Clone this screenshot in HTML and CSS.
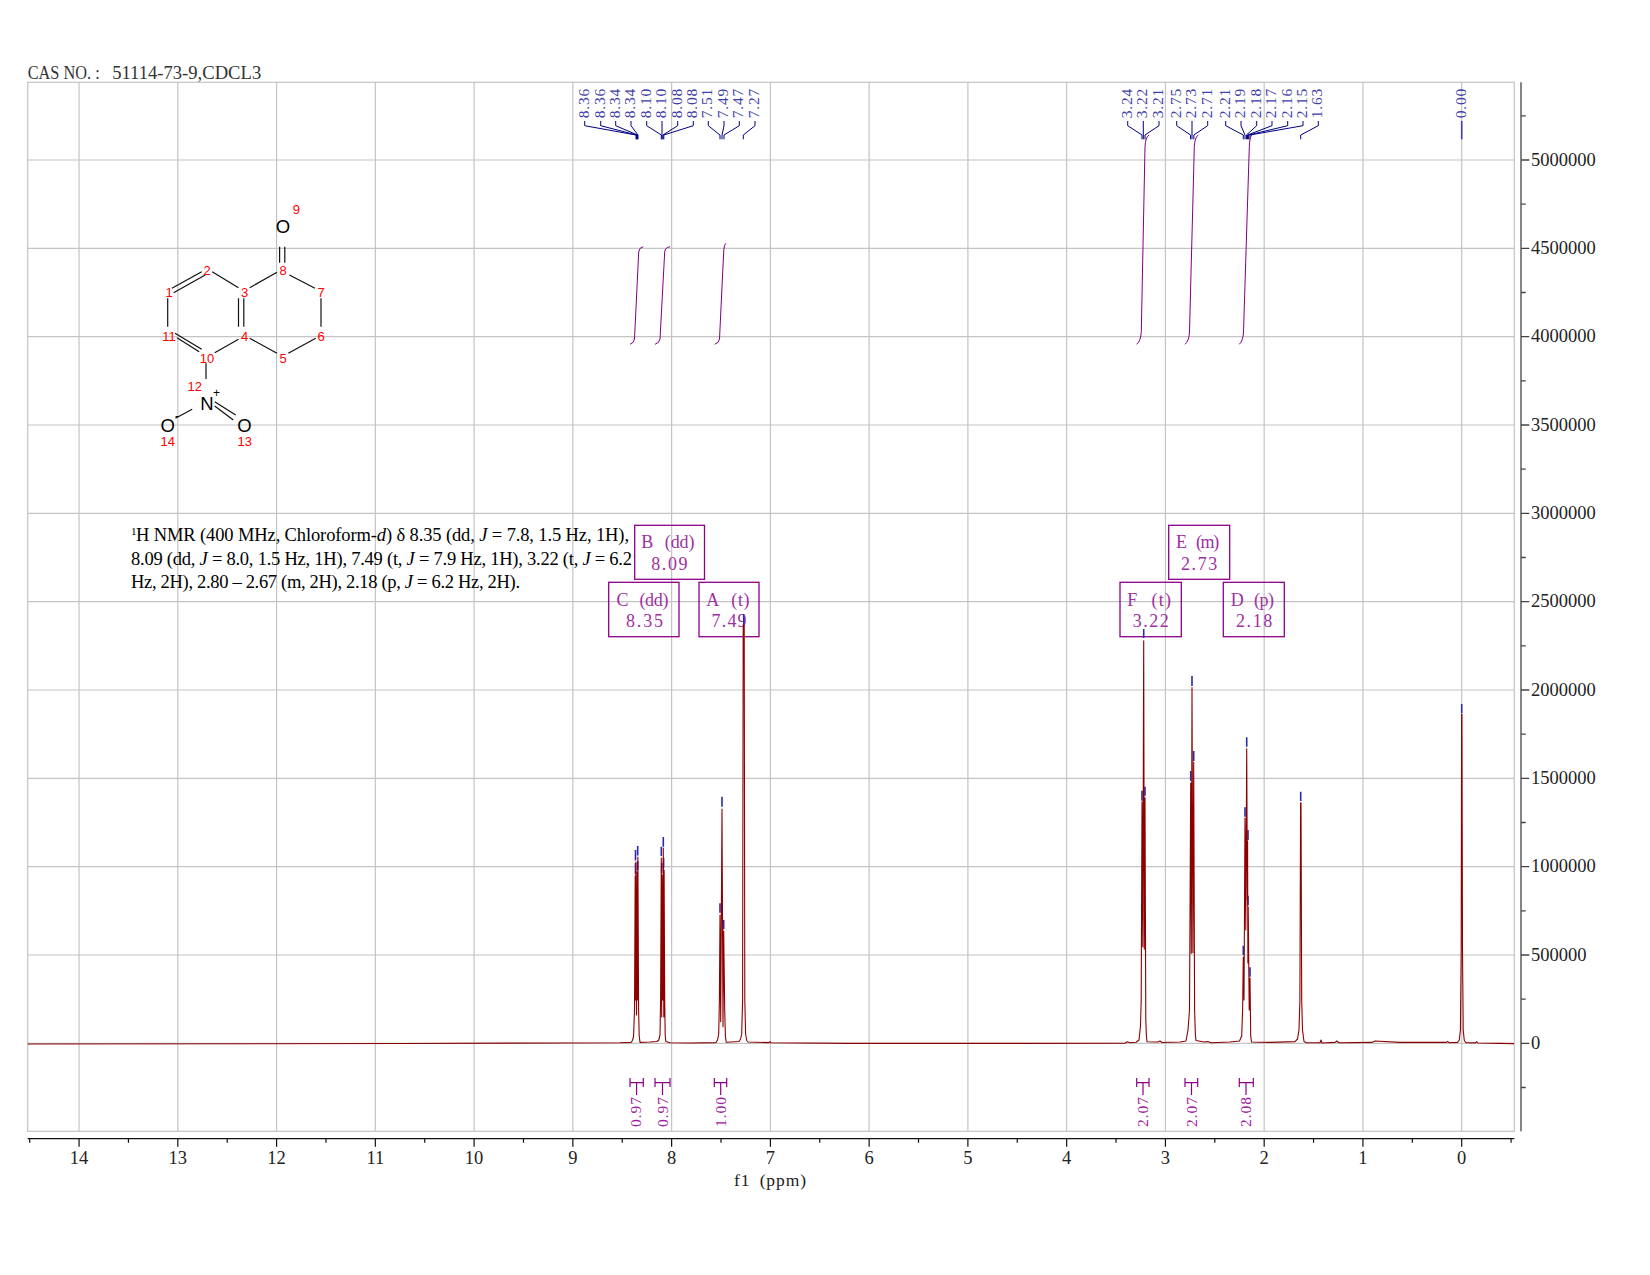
FILE: index.html
```html
<!DOCTYPE html>
<html lang="en">
<head>
<meta charset="utf-8">
<title>1H NMR spectrum</title>
<link rel="stylesheet" href="styles.css">
</head>
<body>
<figure class="page">
<svg class="chart" viewBox="0 0 1650 1275" width="1650" height="1275" xmlns="http://www.w3.org/2000/svg">
  <text class="title" x="27.7" y="79" textLength="72" lengthAdjust="spacingAndGlyphs">CAS NO. :</text>
  <text class="title" x="112.2" y="79" textLength="149" lengthAdjust="spacingAndGlyphs">51114-73-9,CDCL3</text>

  <g class="grid">
    <rect x="27.7" y="82.3" width="1486.6" height="1049"/>
    <path d="M79.06 82.3V1131.3M177.82 82.3V1131.3M276.58 82.3V1131.3M375.34 82.3V1131.3M474.1 82.3V1131.3M572.86 82.3V1131.3M671.62 82.3V1131.3M770.38 82.3V1131.3M869.14 82.3V1131.3M967.9 82.3V1131.3M1066.66 82.3V1131.3M1165.42 82.3V1131.3M1264.18 82.3V1131.3M1362.94 82.3V1131.3M1461.7 82.3V1131.3"/>
    <path d="M27.7 160H1514.3M27.7 248.3H1514.3M27.7 336.7H1514.3M27.7 425H1514.3M27.7 513.3H1514.3M27.7 601.7H1514.3M27.7 690H1514.3M27.7 778.3H1514.3M27.7 866.7H1514.3M27.7 955H1514.3M27.7 1043.3H1514.3"/>
  </g>

  <g class="mol-bonds">
    <path d="M279.6 246.7V262.7M284.8 246.7V262.7"/>
    <path d="M212.2 271.7L238.5 287.7M249.7 287.7L277 272.3M289.4 275L315 288.3M321 298.3V326.7M315.7 338.3L288.3 353.3M277 353.3L249.7 338.3M238.5 339.3L214.7 352.7M206 363.3V379"/>
    <path d="M238.5 298.3V326.7M243.8 298.3V326.7"/>
    <path d="M171.9 288.3L201.7 271.7M173.6 292.7L205.2 275"/>
    <path d="M167.7 298.3V326.7"/>
    <path d="M175 333.3L201.7 349.3M177 337.7L199.2 351.7"/>
    <path d="M214.7 401.7L235.7 415M214.7 406L233.3 420M192.2 409.3L175.4 418.3"/>
  </g>
  <g class="atoms">
    <text x="283" y="232.7">O</text>
    <text x="207" y="410">N</text>
    <text x="167.7" y="432.2">O</text>
    <text x="244.5" y="432.2">O</text>
  </g>
  <text class="charge" x="216.4" y="397">+</text>
  <text class="charge" x="177" y="420">-</text>
  <g class="atom-nums">
    <text x="296.4" y="214">9</text>
    <text x="169" y="297.3">1</text>
    <text x="207" y="274.6">2</text>
    <text x="244.5" y="297.3">3</text>
    <text x="244.5" y="341.3">4</text>
    <text x="283" y="363">5</text>
    <text x="321" y="341.3">6</text>
    <text x="321" y="297.3">7</text>
    <text x="283" y="274.6">8</text>
    <text x="207" y="363">10</text>
    <text x="169" y="341.3">11</text>
    <text x="194.7" y="391.3">12</text>
    <text x="244.8" y="446.3">13</text>
    <text x="167.7" y="446.3">14</text>
  </g>

  <g class="report">
    <text class="report-sup" x="131" y="534.5">1</text>
    <text x="136" y="540.7" textLength="493" lengthAdjust="spacing">H NMR (400 MHz, Chloroform-<tspan class="it">d</tspan>) δ 8.35 (dd, <tspan class="it">J</tspan> = 7.8, 1.5 Hz, 1H),</text>
    <text x="131" y="564.5" textLength="501" lengthAdjust="spacing">8.09 (dd, <tspan class="it">J</tspan> = 8.0, 1.5 Hz, 1H), 7.49 (t, <tspan class="it">J</tspan> = 7.9 Hz, 1H), 3.22 (t, <tspan class="it">J</tspan> = 6.2</text>
    <text x="131" y="588.2" textLength="389" lengthAdjust="spacing">Hz, 2H), 2.80 – 2.67 (m, 2H), 2.18 (p, <tspan class="it">J</tspan> = 6.2 Hz, 2H).</text>
  </g>

  <g class="box-frames">
    <rect x="634.7" y="525.3" width="69.8" height="54"/>
    <rect x="608.7" y="582.3" width="70.3" height="54.4"/>
    <rect x="699" y="582.3" width="60" height="54.4"/>
    <rect x="1168.7" y="525.3" width="61" height="54"/>
    <rect x="1120" y="582.3" width="61.3" height="54.4"/>
    <rect x="1223.3" y="582.3" width="61" height="54.4"/>
  </g>
  <g class="box-text">
    <text x="641.2" y="548" textLength="53.4">B (dd)</text>
    <text x="651.2" y="570" textLength="36.4">8.09</text>
    <text x="616.5" y="605.5" textLength="52">C (dd)</text>
    <text x="626" y="627" textLength="37">8.35</text>
    <text x="706.3" y="605.5" textLength="43.3">A (t)</text>
    <text x="711.5" y="627" textLength="35.1">7.49</text>
    <text x="1176" y="548" textLength="43.3">E (m)</text>
    <text x="1181" y="570" textLength="36.3">2.73</text>
    <text x="1127.3" y="605.5" textLength="43.7">F (t)</text>
    <text x="1132.7" y="627" textLength="36">3.22</text>
    <text x="1230.7" y="605.5" textLength="43.3">D (p)</text>
    <text x="1236" y="627" textLength="36.3">2.18</text>
  </g>

  <g class="peak-labels">
    <text transform="translate(588.7 118.3) rotate(-90)" textLength="29.5">8.36</text>
    <text transform="translate(604.7 118.3) rotate(-90)" textLength="29.5">8.36</text>
    <text transform="translate(619.7 118.3) rotate(-90)" textLength="29.5">8.34</text>
    <text transform="translate(635 118.3) rotate(-90)" textLength="29.5">8.34</text>
    <text transform="translate(650.7 118.3) rotate(-90)" textLength="29.5">8.10</text>
    <text transform="translate(666 118.3) rotate(-90)" textLength="29.5">8.10</text>
    <text transform="translate(681.7 118.3) rotate(-90)" textLength="29.5">8.08</text>
    <text transform="translate(697.3 118.3) rotate(-90)" textLength="29.5">8.08</text>
    <text transform="translate(712.3 118.3) rotate(-90)" textLength="29.5">7.51</text>
    <text transform="translate(728 118.3) rotate(-90)" textLength="29.5">7.49</text>
    <text transform="translate(743.3 118.3) rotate(-90)" textLength="29.5">7.47</text>
    <text transform="translate(759 118.3) rotate(-90)" textLength="29.5">7.27</text>
    <text transform="translate(1131.7 118.3) rotate(-90)" textLength="29.5">3.24</text>
    <text transform="translate(1147.3 118.3) rotate(-90)" textLength="29.5">3.22</text>
    <text transform="translate(1163 118.3) rotate(-90)" textLength="29.5">3.21</text>
    <text transform="translate(1180.7 118.3) rotate(-90)" textLength="29.5">2.75</text>
    <text transform="translate(1196 118.3) rotate(-90)" textLength="29.5">2.73</text>
    <text transform="translate(1211.7 118.3) rotate(-90)" textLength="29.5">2.71</text>
    <text transform="translate(1229.7 118.3) rotate(-90)" textLength="29.5">2.21</text>
    <text transform="translate(1245 118.3) rotate(-90)" textLength="29.5">2.19</text>
    <text transform="translate(1260.7 118.3) rotate(-90)" textLength="29.5">2.18</text>
    <text transform="translate(1276 118.3) rotate(-90)" textLength="29.5">2.17</text>
    <text transform="translate(1291.7 118.3) rotate(-90)" textLength="29.5">2.16</text>
    <text transform="translate(1307 118.3) rotate(-90)" textLength="29.5">2.15</text>
    <text transform="translate(1322.3 118.3) rotate(-90)" textLength="29.5">1.63</text>
    <text transform="translate(1466 118.3) rotate(-90)" textLength="29.5">0.00</text>
  </g>
  <path class="connectors" d="M584.7 121V125.7L636 135V139.3M600.7 121V125.7L636.6 135V139.3M615.7 121V125.7L637.5 135V139.3M631 121V125.7L638 135V139.3M646.7 121V125.7L661.3 135V139.3M662 121V139.3M677.7 121V125.7L663 135V139.3M693.3 121V125.7L663.8 135V139.3M708.3 121V125.7L720 135V139.3M724 121V125.7L722 135V139.3M739.3 121V125.7L724 135V139.3M755 121V125.7L743.3 135V139.3M1127.7 121V125.7L1142 135V139.3M1143.3 121V139.3M1159 121V125.7L1145 135V139.3M1176.7 121V125.7L1190.6 135V139.3M1192 121V139.3M1207.7 121V125.7L1193.8 135V139.3M1225.7 121V125.7L1243.3 135V139.3M1241 121V125.7L1245 135V139.3M1256.7 121V125.7L1246.4 135V139.3M1272 121V125.7L1247.5 135V139.3M1287.7 121V125.7L1248.6 135V139.3M1303 121V125.7L1250 135V139.3M1318.3 121V125.7L1300.7 135V139.3"/>
  <path class="connector-tms" d="M1461.7 121V139.3"/>

  <path class="integrals" d="M630 344.3Q634 343 634.5 339L638.7 252Q639 247.5 643.3 246.7M655 344.3Q659.5 343 660 339L664.7 252Q665 247.5 670 246.7M714.7 344.3Q719 343 719.5 339L723 266L723.8 250Q724.3 244 726 243.3M1136.7 344.3Q1140.8 341 1141.3 331.7L1145 146.7Q1145.5 137 1149 135M1185 344.3Q1189 341 1189.5 332L1194.3 146.7Q1194.8 137 1198.3 135M1239.3 344.3Q1243 341 1243.5 332L1249.3 146.7Q1249.6 137 1252 135"/>

  <path class="marks" d="M635.5 850V860.5M637.7 846V855.5M635.5 863V874M637.7 861V870M661.3 846.7V856M663.3 837V846.7M661.7 863V873M663.6 858V868M720 903.3V912.7M722 796.7V806.7M723.7 920V929.3M743.7 614V625M1142 790.7V800.7M1143.7 629V638M1145 786.7V795.7M1190.7 771V780.7M1192 676V686M1193.7 751V761M1243.3 945.7V955M1245 807.3V816.7M1246.7 737.3V746.7M1248 830V840M1248 895.7V905M1250 967.3V976.7M1300.7 791.7V801M1461.7 704V713"/>
  <path class="spectrum" d="M27.7 1044L400 1043.5L620 1042.8L631 1042.4L632.5 1040.5L633.6 1036L634.5 1010L635.2 876L635.6 1000L635.9 862L636.5 1015L637.2 872L637.4 1000L637.9 857L638.6 1010L639.2 1036L640 1042.4L650 1042L657 1041.5L658.8 1040L660 1035L660.6 1000L661.3 858L661.7 1017L662 875L662.8 1000L663.3 848L663.8 1017L664.1 870L664.7 1000L665.2 1035L665.8 1041.5L670 1042.8L690 1043L716 1042.6L717.5 1040L718.7 1034L719.4 1000L720 915L720.7 1021.7L722 809L723 1026.7L723.7 931L724.7 1010L725.4 1036L726.2 1042.3L739 1041.5L740.6 1039L741.7 1034L742.6 1000L743.2 625L744.2 625L744.8 1000L745.6 1034L746.7 1040.5L748 1042L769 1042.6L770 1041.5L771 1042.8L850 1043.4L1125 1043.3L1127.3 1041.8L1130 1042.8L1136 1042.2L1139 1040L1140.5 1026L1141.2 1000L1142 801.7L1142.8 946.7L1143.7 640.7L1144.3 949.3L1145 797.7L1145.8 1020L1146.4 1036L1147 1041.7L1158 1042L1160 1041L1162 1042.5L1180 1042L1186 1041L1188 1030L1189.5 1010L1190.7 783L1191.3 953.3L1192 687.5L1192.9 952.7L1193.7 762L1194.6 1010L1195.4 1035L1196 1040.5L1204 1042L1208 1041.6L1211 1042.8L1230 1042L1239.5 1041L1241.7 1036L1242.6 1010L1243.3 957L1244 1000L1245 818L1245.8 930L1246.7 748.7L1247.4 900L1247.6 841L1247.9 963L1248.2 907L1249.2 1010L1250 978L1250.7 1036L1251.5 1042L1270 1042.4L1295 1041.6L1297.5 1039L1299 1030L1299.9 1000L1300.6 802.7L1301 802.7L1301.7 1000L1302.5 1030L1304 1041.5L1306 1042.6L1320 1042.8L1321 1040L1322 1043L1335 1042.4L1336.7 1041L1339 1042.8L1372 1042.4L1375 1041L1400 1042.4L1446.5 1042.4L1447.7 1041.3L1449 1042.7L1457.5 1042.4L1459.3 1040L1460.4 1030L1461.2 950L1461.6 714L1461.9 714L1462.5 950L1463.2 1030L1464.3 1040.5L1466 1042.6L1475.5 1042.9L1476.7 1041.5L1478 1043L1500 1043.4L1514 1043.6"/>

  <g class="int-marks">
    <path d="M630 1078V1087M643.3 1078V1087M630 1082.7H643.3M636.6 1082.7V1095"/>
    <path d="M655 1078V1087M670 1078V1087M655 1082.7H670M662.5 1082.7V1095"/>
    <path d="M714.3 1078V1087M726.7 1078V1087M714.3 1082.7H726.7M720.7 1082.7V1095"/>
    <path d="M1136.7 1078V1087M1149 1078V1087M1136.7 1082.7H1149M1143 1082.7V1095"/>
    <path d="M1185 1078V1087M1197.7 1078V1087M1185 1082.7H1197.7M1191.5 1082.7V1095"/>
    <path d="M1239.3 1078V1087M1253.3 1078V1087M1239.3 1082.7H1253.3M1246 1082.7V1095"/>
  </g>
  <g class="int-labels">
    <text transform="translate(640.5 1127) rotate(-90)" textLength="30">0.97</text>
    <text transform="translate(667.5 1127) rotate(-90)" textLength="30">0.97</text>
    <text transform="translate(725.7 1127) rotate(-90)" textLength="30">1.00</text>
    <text transform="translate(1148 1127) rotate(-90)" textLength="30">2.07</text>
    <text transform="translate(1196.5 1127) rotate(-90)" textLength="30">2.07</text>
    <text transform="translate(1251 1127) rotate(-90)" textLength="30">2.08</text>
  </g>

  <path class="axis-x" d="M27.7 1138.7H1514.3M79.06 1138.7V1146.7M177.82 1138.7V1146.7M276.58 1138.7V1146.7M375.34 1138.7V1146.7M474.1 1138.7V1146.7M572.86 1138.7V1146.7M671.62 1138.7V1146.7M770.38 1138.7V1146.7M869.14 1138.7V1146.7M967.9 1138.7V1146.7M1066.66 1138.7V1146.7M1165.42 1138.7V1146.7M1264.18 1138.7V1146.7M1362.94 1138.7V1146.7M1461.7 1138.7V1146.7M29.68 1138.7V1142.7M128.44 1138.7V1142.7M227.2 1138.7V1142.7M325.96 1138.7V1142.7M424.72 1138.7V1142.7M523.48 1138.7V1142.7M622.24 1138.7V1142.7M721 1138.7V1142.7M819.76 1138.7V1142.7M918.52 1138.7V1142.7M1017.28 1138.7V1142.7M1116.04 1138.7V1142.7M1214.8 1138.7V1142.7M1313.56 1138.7V1142.7M1412.32 1138.7V1142.7M1511.08 1138.7V1142.7"/>
  <g class="x-labels">
    <text x="79.06" y="1163.5">14</text>
    <text x="177.82" y="1163.5">13</text>
    <text x="276.58" y="1163.5">12</text>
    <text x="375.34" y="1163.5">11</text>
    <text x="474.1" y="1163.5">10</text>
    <text x="572.86" y="1163.5">9</text>
    <text x="671.62" y="1163.5">8</text>
    <text x="770.38" y="1163.5">7</text>
    <text x="869.14" y="1163.5">6</text>
    <text x="967.9" y="1163.5">5</text>
    <text x="1066.66" y="1163.5">4</text>
    <text x="1165.42" y="1163.5">3</text>
    <text x="1264.18" y="1163.5">2</text>
    <text x="1362.94" y="1163.5">1</text>
    <text x="1461.7" y="1163.5">0</text>
  </g>
  <text class="x-title" x="734" y="1185.7" textLength="72">f1 (ppm)</text>

  <path class="axis-y" d="M1521 82.3V1131.3M1521 160H1529.3M1521 248.3H1529.3M1521 336.7H1529.3M1521 425H1529.3M1521 513.3H1529.3M1521 601.7H1529.3M1521 690H1529.3M1521 778.3H1529.3M1521 866.7H1529.3M1521 955H1529.3M1521 1043.3H1529.3M1521 115.8H1525.7M1521 204.2H1525.7M1521 292.5H1525.7M1521 380.8H1525.7M1521 469.2H1525.7M1521 557.5H1525.7M1521 645.8H1525.7M1521 734.2H1525.7M1521 822.5H1525.7M1521 910.8H1525.7M1521 999.2H1525.7M1521 1087.5H1525.7"/>
  <g class="y-labels">
    <text x="1531" y="165.5">5000000</text>
    <text x="1531" y="253.8">4500000</text>
    <text x="1531" y="342.2">4000000</text>
    <text x="1531" y="430.5">3500000</text>
    <text x="1531" y="518.8">3000000</text>
    <text x="1531" y="607.2">2500000</text>
    <text x="1531" y="695.5">2000000</text>
    <text x="1531" y="783.8">1500000</text>
    <text x="1531" y="872.2">1000000</text>
    <text x="1531" y="960.5">500000</text>
    <text x="1531" y="1048.8">0</text>
  </g>
</svg>
</figure>
</body>
</html>
```
FILE: styles.css
```css
html, body {
  margin: 0;
  padding: 0;
  background: #fff;
}
.page {
  margin: 0;
  width: 1650px;
  height: 1275px;
}
.chart {
  display: block;
  font-family: "Liberation Serif", serif;
}
.title {
  font-size: 18.5px;
  fill: #333;
}
.grid rect,
.grid path {
  fill: none;
  stroke: #c4c4c4;
  stroke-width: 1.2;
}
.mol-bonds path {
  fill: none;
  stroke: #111;
  stroke-width: 1.2;
}
.atoms text {
  font-family: "Liberation Sans", sans-serif;
  font-size: 18.5px;
  text-anchor: middle;
  fill: #000;
}
.charge {
  font-family: "Liberation Sans", sans-serif;
  font-size: 12px;
  text-anchor: middle;
  fill: #000;
}
.atom-nums text {
  font-family: "Liberation Sans", sans-serif;
  font-size: 13px;
  text-anchor: middle;
  fill: #f00;
}
.report text {
  font-size: 18.5px;
  fill: #000;
}
.report .report-sup {
  font-size: 11px;
}
.it {
  font-style: italic;
}
.box-frames rect {
  fill: none;
  stroke: #8b008b;
  stroke-width: 1.3;
}
.box-text text {
  font-size: 18px;
  word-spacing: 7px;
  fill: #a030a0;
}
.peak-labels text {
  font-size: 15.5px;
  fill: #3f3fa8;
}
.connectors {
  fill: none;
  stroke: #000080;
  stroke-width: 1;
}
.connector-tms {
  fill: none;
  stroke: #4040a8;
  stroke-width: 1.6;
}
.integrals {
  fill: none;
  stroke: #800080;
  stroke-width: 1;
}
.marks {
  fill: none;
  stroke: #2a2ab0;
  stroke-width: 1.6;
}
.spectrum {
  fill: none;
  stroke: #8b0000;
  stroke-width: 1.1;
  stroke-linejoin: round;
}
.int-marks path {
  fill: none;
  stroke: #8b008b;
  stroke-width: 1.2;
}
.int-labels text {
  font-size: 15.5px;
  fill: #a020a0;
}
.axis-x {
  fill: none;
  stroke: #111;
  stroke-width: 1.2;
}
.axis-y {
  fill: none;
  stroke: #444;
  stroke-width: 1.3;
}
.x-labels text {
  font-size: 18.5px;
  text-anchor: middle;
  fill: #222;
}
.x-title {
  font-size: 17.5px;
  word-spacing: 4px;
  fill: #222;
}
.y-labels text {
  font-size: 18.5px;
  fill: #222;
}
```
